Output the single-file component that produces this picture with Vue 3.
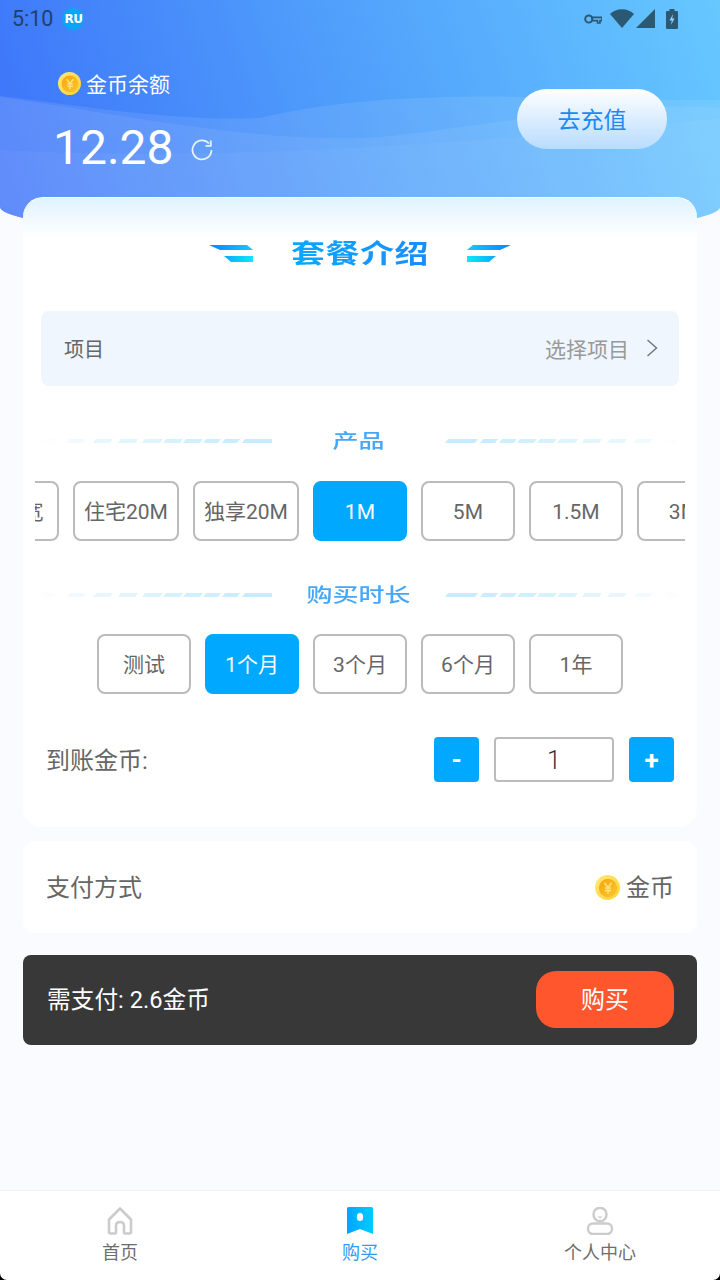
<script setup>
import { ref } from 'vue'

const products = ['独享宽', '住宅20M', '独享20M', '1M', '5M', '1.5M', '3M']
const durations = ['测试', '1个月', '3个月', '6个月', '1年']
const activeProduct = ref('1M')
const activeDuration = ref('1个月')
const count = ref(1)

// x, width, opacity of each dash in the section divider
const dashes = [
  [0, 13, 0.08], [27, 16, 0.25], [53, 17, 0.4], [78, 17, 0.5], [102, 18, 0.6],
  [123, 17, 0.7], [143, 17, 0.8], [163, 15, 0.85], [182, 15, 0.95], [202, 30, 1]
]
const dashesRight = dashes.map(([x, w, o]) => [232 - x - w, w, o])
const dashPoints = (d) => {
  const [x, w] = d
  return `${x + 3},0 ${x + w + 3},0 ${x + w},4 ${x},4`
}
</script>

<template>
  <div class="page">
    <div class="header">
      <svg class="waves" viewBox="0 0 720 238" preserveAspectRatio="none">
        <path d="M0 96C70 104 170 122 260 118C400 85 560 100 720 100V238H0Z" fill="#fff" opacity=".09" />
        <path d="M0 97C110 112 260 145 380 137C480 128 600 100 720 108V238H0Z" fill="#fff" opacity=".07" />
        <path d="M0 150C180 160 420 150 720 118V238H0Z" fill="#fff" opacity=".04" />
      </svg>
      <div class="status">
        <span class="time">5:10</span>
        <span class="badge">RU</span>
        <span class="status-right">
          <svg width="18" height="12" viewBox="0 0 18 12" class="key">
            <circle cx="4.800" cy="6" r="3.600" fill="none" stroke="#2b5872" stroke-width="2" />
            <path d="M8 4.400H18V7.600H16V10H13.500V7.600H8Z" fill="none" stroke="#2b5872" stroke-width="1.600" />
          </svg>
          <svg width="24" height="19" viewBox="0 0 24 19" class="wifi"><path d="M0 5C6-1.500 18-1.500 24 5L12 19Z" fill="#2b5872" /></svg>
          <svg width="19" height="19" viewBox="0 0 19 19" class="signal"><path d="M19 0V19H0Z" fill="#2b5872" /></svg>
          <svg width="12" height="20" viewBox="0 0 12 20" class="battery">
            <path d="M3.500 0H8.500V2H11Q12 2 12 3V19Q12 20 11 20H1Q0 20 0 19V3Q0 2 1 2H3.500Z" fill="#2b5872" />
            <path d="M7 5L3.500 11.500H5.800L5 16L8.500 9.500H6.200Z" fill="#8fd6f5" />
          </svg>
        </span>
      </div>
      <div class="balance">
        <div>
          <div class="balance-label">
            <svg class="coin" width="23" height="23" viewBox="0 0 24 24">
              <defs>
                <linearGradient id="coinRim" x1="0" y1="0" x2="1" y2="1"><stop offset="0" stop-color="#ffe979" /><stop offset="1" stop-color="#ffd22e" /></linearGradient>
                <linearGradient id="coinFace" x1="0" y1="0" x2="1" y2="1"><stop offset="0" stop-color="#f6a512" /><stop offset="1" stop-color="#fcc52c" /></linearGradient>
              </defs>
              <circle cx="12" cy="12" r="12" fill="url(#coinRim)" />
              <circle cx="12.500" cy="12.500" r="8.800" fill="url(#coinFace)" />
              <path d="M9 7.500L12.500 12L16 7.500M9.500 12.500H15.500M9.500 15H15.500M12.500 12V18" fill="none" stroke="#ffe27a" stroke-width="1.500" />
            </svg>
            金币余额
          </div>
          <div class="balance-num">
            12.28
            <svg class="refresh" width="22" height="22" viewBox="0 0 22 22">
              <path d="M18 4.500A9.500 9.500 0 1 0 20.500 11" fill="none" stroke="#e4f1ff" stroke-width="1.800" />
              <path d="M19.800 1.500V6.800H14.500" fill="none" stroke="#e4f1ff" stroke-width="1.800" />
            </svg>
          </div>
        </div>
        <button class="recharge"><span>去充值</span></button>
      </div>
    </div>

    <div class="card">
      <div class="card-title">
        <svg class="title-mark" width="44" height="18" viewBox="0 0 44 18">
          <defs>
            <linearGradient id="markA" x1="0" x2="1"><stop offset="0" stop-color="#0a84ff" /><stop offset="1" stop-color="#18c8fb" /></linearGradient>
            <linearGradient id="markB" x1="0" x2="1"><stop offset="0" stop-color="#10a8fb" /><stop offset="1" stop-color="#0ce8fb" /></linearGradient>
          </defs>
          <path d="M0 0H38L44 5H11Z" fill="url(#markA)" />
          <path d="M15 11H44V17H22Z" fill="url(#markB)" />
        </svg>
        <span class="title-text">套餐介绍</span>
        <svg class="title-mark flip" width="44" height="18" viewBox="0 0 44 18">
          <path d="M0 0H38L44 5H11Z" fill="url(#markA)" />
          <path d="M15 11H44V17H22Z" fill="url(#markB)" />
        </svg>
      </div>

      <div class="project">
        <span class="project-name">项目</span>
        <span class="project-pick">
          选择项目
          <svg width="12" height="18" viewBox="0 0 12 18"><path d="M1.500 1L10.500 9L1.500 17" fill="none" stroke="#777" stroke-width="1.500" /></svg>
        </span>
      </div>

      <div class="divider first">
        <svg width="232" height="4" viewBox="0 0 232 4">
          <polygon v-for="d in dashes" :key="d[0]" :points="dashPoints(d)" fill="#c6ecff" :opacity="d[2]" />
        </svg>
        <span>产品</span>
        <svg width="232" height="4" viewBox="0 0 232 4">
          <polygon v-for="d in dashesRight" :key="d[0]" :points="dashPoints(d)" fill="#c6ecff" :opacity="d[2]" />
        </svg>
      </div>
      <div class="product-scroll">
        <div class="product-track">
          <div v-for="p in products" :key="p" class="chip" :class="{ active: p === activeProduct }">{{ p }}</div>
        </div>
      </div>

      <div class="divider second">
        <svg width="232" height="4" viewBox="0 0 232 4">
          <polygon v-for="d in dashes" :key="d[0]" :points="dashPoints(d)" fill="#c6ecff" :opacity="d[2]" />
        </svg>
        <span>购买时长</span>
        <svg width="232" height="4" viewBox="0 0 232 4">
          <polygon v-for="d in dashesRight" :key="d[0]" :points="dashPoints(d)" fill="#c6ecff" :opacity="d[2]" />
        </svg>
      </div>
      <div class="durations">
        <div v-for="d in durations" :key="d" class="chip" :class="{ active: d === activeDuration }">{{ d }}</div>
      </div>

      <div class="amount">
        <span class="amount-label">到账金币:</span>
        <div class="stepper">
          <button class="step">-</button>
          <div class="count">{{ count }}</div>
          <button class="step">+</button>
        </div>
      </div>
    </div>

    <div class="pay-way">
      <span class="pay-text">支付方式</span>
      <span class="pay-coin">
        <svg class="coin" width="25" height="25" viewBox="0 0 24 24">
          <circle cx="12" cy="12" r="12" fill="url(#coinRim)" />
          <circle cx="12.500" cy="12.500" r="8.800" fill="url(#coinFace)" />
          <path d="M9 7.500L12.500 12L16 7.500M9.500 12.500H15.500M9.500 15H15.500M12.500 12V18" fill="none" stroke="#ffe27a" stroke-width="1.500" />
        </svg>
        <span class="pay-text">金币</span>
      </span>
    </div>

    <div class="pay-bar">
      <span class="pay-sum">需支付: 2.6金币</span>
      <button class="buy">购买</button>
    </div>

    <div class="tab-wrap">
      <div class="tabs">
        <div class="tab">
          <svg width="28" height="28" viewBox="0 0 28 28">
            <path d="M14 1.500L3 12.500V25Q3 26.500 4.500 26.500H9Q10 26.500 10 25.500V19Q10 15 14 15Q18 15 18 19V25.500Q18 26.500 19 26.500H23.500Q25 26.500 25 25V12.500Z" fill="none" stroke="#ccc" stroke-width="2.600" stroke-linejoin="round" />
          </svg>
          <span>首页</span>
        </div>
        <div class="tab on">
          <svg width="28" height="28" viewBox="0 0 28 28">
            <defs><linearGradient id="mark" x1="0" x2="1"><stop offset="0" stop-color="#00a6ff" /><stop offset="1" stop-color="#00ccff" /></linearGradient></defs>
            <path d="M1 1.500Q1 0 2.500 0H25.500Q27 0 27 1.500V27L14 22L1 27Z" fill="url(#mark)" />
            <ellipse cx="14" cy="10" rx="3.200" ry="4" fill="#fff" />
          </svg>
          <span>购买</span>
        </div>
        <div class="tab">
          <svg width="28" height="28" viewBox="0 0 28 28">
            <ellipse cx="14" cy="7.500" rx="6.500" ry="6.800" fill="none" stroke="#ccc" stroke-width="2.400" />
            <path d="M11.500 9.500H16.500L14 11.500Z" fill="#ccc" />
            <rect x="2" y="16.500" width="24" height="10.500" rx="5" fill="none" stroke="#ccc" stroke-width="2.400" />
          </svg>
          <span>个人中心</span>
        </div>
      </div>
    </div>
  </div>
</template>

<style>
body {
  margin: 0;
  background: #fafbff;
}
</style>

<style scoped>
.page {
  width: 720px;
  min-height: 1280px;
  display: flex;
  flex-direction: column;
  background: #fafbff;
  font-family: Roboto, "Noto Sans CJK SC", sans-serif;
  color: #666;
}
button {
  font-family: inherit;
  border: none;
  padding: 0;
}
.header {
  position: relative;
  height: 238px;
  margin-bottom: -41px;
  border-radius: 0 0 360px 360px / 0 0 31px 31px;
  background: linear-gradient(72deg, #3c72fa 0%, #4f9dfb 48%, #66c8ff 100%);
  overflow: hidden;
}
.waves {
  position: absolute;
  left: 0;
  top: 0;
  width: 720px;
  height: 238px;
}
.status {
  position: relative;
  display: flex;
  align-items: center;
  height: 37px;
  padding: 0 42px 0 12px;
}
.time {
  font-size: 21.500px;
  color: #1f406f;
}
.badge {
  width: 22px;
  height: 22px;
  margin-left: 9px;
  border-radius: 50%;
  background: #0ba4f6;
  color: #fff;
  font: 700 12px/22px "DejaVu Sans", sans-serif;
  letter-spacing: -.5px;
  text-align: center;
}
.status-right {
  display: flex;
  align-items: center;
  margin-left: auto;
}
.wifi {
  margin-left: 8px;
}
.signal {
  margin-left: 2px;
}
.battery {
  margin-left: 11px;
}
.balance {
  position: relative;
  display: flex;
  justify-content: space-between;
  padding: 33px 53px 0 53px;
}
.balance-label {
  display: flex;
  align-items: center;
  gap: 5px;
  padding-left: 5px;
  height: 26px;
  font-size: 21px;
  color: #fff;
}
.balance-num {
  display: flex;
  align-items: center;
  margin-top: 24px;
  font-size: 48px;
  line-height: 56px;
  color: #fff;
}
.refresh {
  margin: 4px 0 0 17px;
}
.recharge {
  width: 150px;
  height: 60px;
  margin-top: 19px;
  padding-bottom: 3px;
  border-radius: 30px;
  background: linear-gradient(180deg, #fff 0%, #b8dcfd 100%);
  color: #1a8af5;
  font-size: 23px;
}
.card {
  position: relative;
  box-sizing: border-box;
  width: 674px;
  height: 630px;
  margin: 0 23px;
  border-top: 1px solid #fff;
  border-radius: 20px;
  background: linear-gradient(180deg, #e0f3ff 0, #fff 40px);
}
.card-title {
  display: flex;
  align-items: center;
  justify-content: center;
  height: 36px;
  margin-top: 38px;
}
.title-mark {
  flex: none;
}
.flip {
  transform: scaleX(-1);
}
.title-text {
  width: 138px;
  margin: 0 38px;
  font-size: 34px;
  font-weight: 700;
  line-height: 36px;
  letter-spacing: .5px;
  white-space: nowrap;
  transform: scaleY(.78);
  background: linear-gradient(90deg, #08a8ff, #1a8cff);
  -webkit-background-clip: text;
  background-clip: text;
  color: transparent;
}
.project {
  display: flex;
  align-items: center;
  justify-content: space-between;
  height: 75px;
  margin: 39px 18px 0;
  padding: 0 21px 2px 23px;
  border-radius: 8px;
  box-sizing: border-box;
  background: #eff6fe;
  font-size: 20px;
  color: #666;
}
.project-name {
  margin-top: 2px;
}
.project-pick {
  display: flex;
  align-items: center;
  gap: 17px;
  font-size: 21px;
  color: #999;
}
.divider {
  display: flex;
  align-items: center;
  justify-content: center;
  height: 28px;
  padding-right: 3px;
  color: #46a7f8;
  font-size: 26px;
  font-weight: 500;
}
.divider.first {
  margin-top: 41px;
}
.divider.second {
  margin-top: 40px;
}
.divider span {
  width: 173px;
  margin-bottom: 3px;
  text-align: center;
  white-space: nowrap;
  transform: scaleY(.76);
}
.product-scroll {
  width: 650px;
  margin: 26px 0 0 12px;
  overflow: hidden;
}
.product-track {
  display: flex;
  gap: 14px;
  margin-left: -70px;
}
.chip {
  flex: none;
  box-sizing: border-box;
  min-width: 94px;
  height: 60px;
  padding: 0 9px;
  border: 2px solid #bbb;
  border-radius: 8px;
  background: #fff;
  font-size: 21px;
  line-height: 58px;
  text-align: center;
  color: #666;
  white-space: nowrap;
}
.chip.active {
  border-color: #00a8ff;
  background: #00a8ff;
  color: #fff;
}
.durations {
  display: flex;
  justify-content: center;
  gap: 14px;
  margin-top: 25px;
}
.amount {
  display: flex;
  align-items: center;
  justify-content: space-between;
  height: 45px;
  margin-top: 43px;
  padding: 0 23px;
  font-size: 24px;
}
.amount-label {
  margin-top: -2px;
}
.stepper {
  display: flex;
  gap: 15px;
}
.step {
  width: 45px;
  height: 45px;
  border-radius: 4px;
  background: #00a8ff;
  color: #fff;
  font-size: 26px;
  font-weight: 700;
}
.count {
  box-sizing: border-box;
  width: 120px;
  height: 45px;
  border: 2px solid #bbb;
  border-radius: 4px;
  background: #fff;
  font-size: 25px;
  font-weight: 300;
  line-height: 44px;
  text-align: center;
  color: #333;
}
.pay-way {
  display: flex;
  align-items: center;
  justify-content: space-between;
  box-sizing: border-box;
  width: 674px;
  height: 92px;
  margin: 14px 23px 0;
  padding: 0 23px;
  border-radius: 12px;
  background: #fff;
  font-size: 24px;
}
.pay-text {
  margin-top: -3px;
}
.pay-coin {
  display: flex;
  align-items: center;
  gap: 6px;
}
.pay-bar {
  display: flex;
  align-items: center;
  justify-content: space-between;
  box-sizing: border-box;
  width: 674px;
  height: 90px;
  margin: 22px 23px 0;
  padding: 0 23px 2px 24px;
  border-radius: 8px;
  background: #383838;
  color: #fff;
  font-size: 24px;
}
.pay-sum {
  margin-top: -2px;
  font-size: 23.700px;
}
.buy {
  width: 138px;
  height: 57px;
  padding-bottom: 3px;
  border-radius: 20px;
  background: #ff562e;
  color: #fff;
  font-size: 24px;
}
.tab-wrap {
  margin-top: auto;
  background: #000;
}
.tabs {
  display: flex;
  box-sizing: border-box;
  height: 90px;
  border-top: 1px solid #f2f3f5;
  border-radius: 0 0 7px 7px;
  background: #fff;
}
.tab {
  flex: 1;
  display: flex;
  flex-direction: column;
  align-items: center;
  padding-top: 16px;
  font-size: 18px;
  line-height: 26px;
  color: #6e6e6e;
}
.tab svg {
  display: block;
  margin-bottom: 5px;
}
.tab.on {
  color: #2f9bf7;
}
</style>
